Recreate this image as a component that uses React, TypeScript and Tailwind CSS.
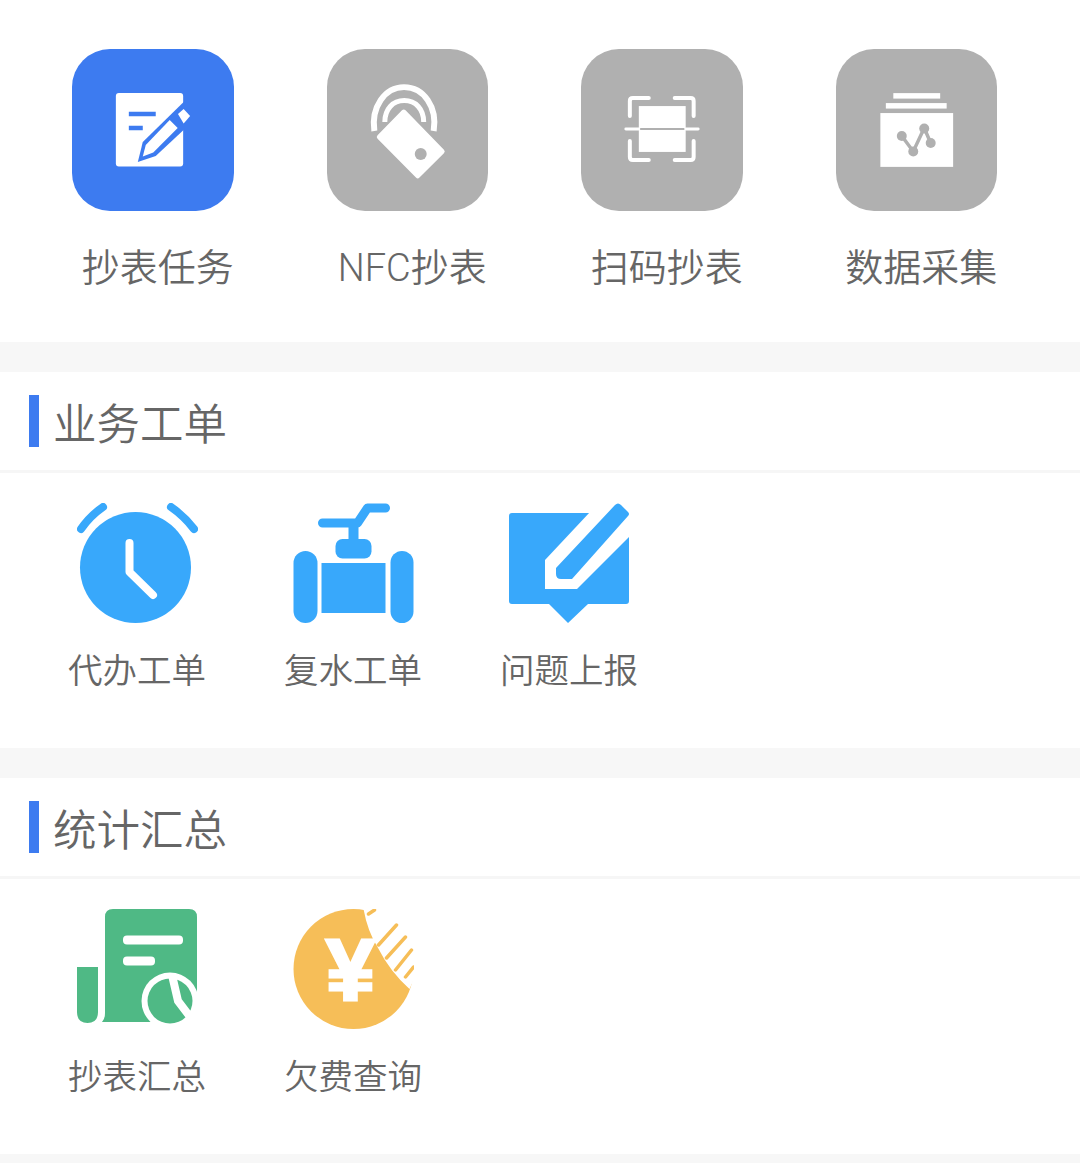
import type { ReactNode } from "react";

const GRAY = "#b0b0b0";
const BLUE = "#3d7bf0";
const SKY = "#38a8fb";
const GREEN = "#4fb985";
const AMBER = "#f6be58";

const NoteIcon = () => (
  <svg viewBox="0 0 162 162" className="w-full h-full">
    <rect x="44" y="44" width="67.5" height="73.5" rx="3" fill="#fff" />
    <path d="M57 65H84M57 79H71" stroke={BLUE} strokeWidth="4.5" />
    <path d="M113 52L71 93L66 113L84 107L113 80Z" fill={BLUE} />
    <path d="M74 96L71 107.5L81.5 103.5L106 79L98 71Z" fill="#fff" />
    <path d="M106.3 65L112 60L118.5 67L112 74.5Z" fill="#fff" />
  </svg>
);

const NfcIcon = () => (
  <svg viewBox="0 0 162 162" className="w-full h-full">
    <path d="M47.5 82C44 58 58 38 77.3 38C97 38 111 58 107 82" fill="none" stroke="#fff" strokeWidth="6" />
    <path d="M58 73C58 60 66 51.5 77.5 51.5C89 51.5 97 60 97 73" fill="none" stroke="#fff" strokeWidth="5" />
    <path d="M77 63L115.5 102.5L91 127L52.5 88Z" fill="#fff" stroke="#fff" strokeWidth="5" strokeLinejoin="round" />
    <circle cx="94" cy="105" r="6" fill={GRAY} />
  </svg>
);

const ScanIcon = () => (
  <svg viewBox="0 0 162 162" className="w-full h-full">
    <g fill="none" stroke="#fff" strokeWidth="4" strokeLinecap="round" strokeLinejoin="round">
      <path d="M68 49H52Q49 49 49 52V67" />
      <path d="M94 49H110Q113 49 113 52V67" />
      <path d="M49 92V108Q49 111 52 111H68" />
      <path d="M113 92V108Q113 111 110 111H94" />
    </g>
    <rect x="58" y="57" width="47" height="46" fill="#fff" />
    <path d="M58 80H105" stroke={GRAY} strokeWidth="2" />
    <path d="M45 80H58M105 80H117.5" stroke="#fff" strokeWidth="3" strokeLinecap="round" />
  </svg>
);

const DataIcon = () => (
  <svg viewBox="0 0 162 162" className="w-full h-full">
    <rect x="57.5" y="44" width="47" height="5.5" fill="#fff" />
    <rect x="50" y="54" width="61" height="5.5" fill="#fff" />
    <rect x="44.5" y="64" width="73" height="54" fill="#fff" />
    <path d="M66 87L77.5 102.5L88.5 79L95 94" fill="none" stroke={GRAY} strokeWidth="3.5" />
    <circle cx="66" cy="87" r="5" fill={GRAY} />
    <circle cx="77.5" cy="102.5" r="5" fill={GRAY} />
    <circle cx="88.5" cy="79.5" r="5" fill={GRAY} />
    <circle cx="95" cy="94" r="5" fill={GRAY} />
  </svg>
);

const ClockIcon = () => (
  <svg viewBox="0 0 121 120" className="w-full h-full">
    <circle cx="58.5" cy="64.5" r="55.5" fill={SKY} />
    <path d="M52.5 40V69L76 92" fill="none" stroke="#fff" strokeWidth="8" strokeLinecap="round" strokeLinejoin="round" />
    <path d="M4 26Q13 13 26 4M94 4Q107 13 117 26" fill="none" stroke={SKY} strokeWidth="8" strokeLinecap="round" />
  </svg>
);

const ValveIcon = () => (
  <svg viewBox="0 0 120 120" className="w-full h-full">
    <rect x="0" y="48" width="24" height="72" rx="12" fill={SKY} />
    <rect x="97" y="48" width="23" height="72" rx="11.5" fill={SKY} />
    <rect x="28" y="60" width="64" height="50" fill={SKY} />
    <rect x="42" y="36" width="36" height="19.5" rx="7" fill={SKY} />
    <rect x="55" y="20" width="10" height="18" fill={SKY} />
    <path d="M29 20H64L74 5H92" fill="none" stroke={SKY} strokeWidth="9" strokeLinecap="round" strokeLinejoin="round" />
  </svg>
);

const ReportIcon = () => (
  <svg viewBox="0 0 121 120" className="w-full h-full">
    <path d="M3 10H118Q120 10 120 12V98Q120 101 117 101H79L59 120L40 101H3Q0 101 0 98V13Q0 10 3 10Z" fill={SKY} />
    <path d="M81 9L36 57V86H68L121 33V9Z" fill="#fff" />
    <path d="M106 2Q109 -1 112 2L119 9Q121 11 119 13L63 76H52Q47 76 47 71V65Z" fill={SKY} />
  </svg>
);

const SummaryIcon = () => (
  <svg viewBox="0 0 121 120" className="w-full h-full">
    <path d="M36 0H112Q120 0 120 8V92H93V113H25Q28 110 28 104V8Q28 0 36 0Z" fill={GREEN} />
    <path d="M0 58H21V103Q21 114 10.5 114Q0 114 0 103Z" fill={GREEN} />
    <rect x="46" y="26.5" width="60" height="9" rx="4" fill="#fff" />
    <rect x="46" y="47.5" width="32" height="9" rx="4" fill="#fff" />
    <circle cx="93" cy="92" r="28.5" fill="#fff" />
    <circle cx="93" cy="92" r="22.5" fill={GREEN} />
    <path d="M95 66L101 92L117 113" fill="none" stroke="#fff" strokeWidth="8" />
  </svg>
);

const ArrearsIcon = () => (
  <svg viewBox="0 0 120 120" className="w-full h-full">
    <circle cx="60" cy="60" r="60" fill={AMBER} />
    <path d="M70 0Q74 22 84 38Q96 62 116 80L125 60V0Z" fill="#fff" />
    <path d="M75 5L81 1M85 36L103 16M93 49L112 28M102 61L118 41M112 68L120 58" stroke={AMBER} strokeWidth="3.5" strokeLinecap="round" />
    <text x="57" y="91" textAnchor="middle" fill="#fff" stroke="#fff" strokeWidth="3" fontSize="88" fontWeight="700" className="font-['Liberation_Sans',sans-serif]">¥</text>
  </svg>
);

const mainItems = [
  { label: "抄表任务", tile: "bg-[#3d7bf0]", icon: <NoteIcon /> },
  { label: "NFC抄表", tile: "bg-[#b0b0b0]", icon: <NfcIcon /> },
  { label: "扫码抄表", tile: "bg-[#b0b0b0]", icon: <ScanIcon /> },
  { label: "数据采集", tile: "bg-[#b0b0b0]", icon: <DataIcon /> },
];

const Band = () => <div className="h-[30px] bg-[#f7f7f7]" />;

const Section = ({ title, items }: { title: string; items: { label: string; icon: ReactNode }[] }) => (
  <section>
    <div className="h-[101px] pl-[29px] flex items-center gap-[14px] border-b-[3px] border-[#f6f6f6]">
      <span className="w-[10px] h-[52px] bg-[#3d7bf0]" />
      <h2 className="pt-[9px] text-[43.5px] leading-none font-[350] text-[#666]">{title}</h2>
    </div>
    <div className="h-[275px] pt-[30px] pl-[29px] grid grid-cols-[repeat(5,216px)] content-start">
      {items.map((item) => (
        <div key={item.label} className="flex flex-col items-center">
          <div className="w-[121px] h-[120px]">{item.icon}</div>
          <span className="mt-[27px] text-[34.5px] leading-[42px] font-[350] text-[#666]">{item.label}</span>
        </div>
      ))}
    </div>
  </section>
);

export default function App() {
  return (
    <div className="w-[1080px] h-[1163px] overflow-hidden bg-white font-['Roboto','Noto_Sans_CJK_SC',sans-serif]">
      <div className="h-[342px] pt-[49px] pl-[25.5px] grid grid-cols-[repeat(4,254.5px)] content-start">
        {mainItems.map((item) => (
          <div key={item.label} className="flex flex-col items-center">
            <div className={`w-[161.5px] h-[162px] rounded-[38px] overflow-hidden ${item.tile}`}>{item.icon}</div>
            <span className="mt-[32px] pl-[10px] text-[38px] leading-[50px] font-[350] text-[#666] whitespace-nowrap">{item.label}</span>
          </div>
        ))}
      </div>
      <Band />
      <Section
        title="业务工单"
        items={[
          { label: "代办工单", icon: <ClockIcon /> },
          { label: "复水工单", icon: <ValveIcon /> },
          { label: "问题上报", icon: <ReportIcon /> },
        ]}
      />
      <Band />
      <Section
        title="统计汇总"
        items={[
          { label: "抄表汇总", icon: <SummaryIcon /> },
          { label: "欠费查询", icon: <ArrearsIcon /> },
        ]}
      />
      <Band />
    </div>
  );
}
